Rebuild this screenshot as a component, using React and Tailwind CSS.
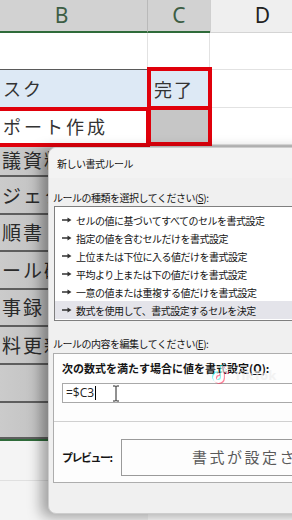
import { FaTiktok } from 'react-icons/fa';

const jp = "font-['Noto_Sans_CJK_JP',sans-serif]";

function Arrow() {
  return (
    <svg width="10" height="6" viewBox="0 0 10 6" className="shrink-0">
      <polygon points="0,2.2 5.5,2.2 5.5,0.6 9.5,3 5.5,5.4 5.5,3.8 0,3.8" fill="#333" />
    </svg>
  );
}

const rules = [
  'セルの値に基づいてすべてのセルを書式設定',
  '指定の値を含むセルだけを書式設定',
  '上位または下位に入る値だけを書式設定',
  '平均より上または下の値だけを書式設定',
  '一意の値または重複する値だけを書式設定',
  '数式を使用して、書式設定するセルを決定',
];

const lowerRows = [
  { h: 'h-[32px]', text: '議資料' },
  { h: 'h-[38px]', text: 'ジェクト' },
  { h: 'h-[37px]', text: '順書' },
  { h: 'h-[38px]', text: 'ール確認' },
  { h: 'h-[37px]', text: '事録' },
  { h: 'h-[38px]', text: '料更新' },
  { h: 'h-[38px]', text: '' },
  { h: 'h-[36px]', text: '' },
];

export default function App() {
  return (
    <div className={`relative w-[292px] h-[520px] overflow-hidden bg-white ${jp}`}>
      {/* column headers */}
      <div className="flex h-[33px]">
        <div className="w-[148px] shrink-0 flex items-center justify-center pr-[24px] bg-[#d2d2d2] border-r border-[#b9b9b9] border-b-2 border-b-[#2f6b3a] font-['Noto_Sans',sans-serif] text-[21px] text-[#3d5e45]">B</div>
        <div className="w-[62px] shrink-0 flex items-center justify-center bg-[#d2d2d2] border-b-2 border-b-[#2f6b3a] font-['Noto_Sans',sans-serif] text-[21px] text-[#3d5e45]">C</div>
        <div className="flex-1 flex items-center justify-center pl-[22px] bg-[#efefef] border-l border-[#cfcfcf] border-b border-b-[#d4d4d4] font-['Noto_Sans',sans-serif] text-[21px] text-[#222]">D</div>
      </div>

      {/* row 1 */}
      <div className="flex h-[37px]">
        <div className="w-[148px] shrink-0 border-r border-[#e2e2e2] border-b border-b-[#5a5a5a]" />
        <div className="w-[62px] shrink-0 border-r border-[#e2e2e2] border-b border-b-[#e2e2e2]" />
        <div className="flex-1 border-b border-[#e2e2e2]" />
      </div>

      {/* row 2 */}
      <div className="flex h-[38px] text-[18px] text-[#333] tracking-[2px]">
        <div className="w-[148px] shrink-0 flex items-center pl-[3px] bg-[#dde9f5] border-b border-[#5a5a5a]">スク</div>
        <div className="w-[62px] shrink-0 flex items-center pl-[6px] bg-[#dde9f5]">完了</div>
        <div className="flex-1 border-b border-[#e2e2e2]" />
      </div>

      {/* row 3 */}
      <div className="flex h-[37px] text-[18px] text-[#333] tracking-[3px]">
        <div className="w-[148px] shrink-0 flex items-center pl-[3px] bg-white">ポート作成</div>
        <div className="w-[62px] shrink-0 bg-[#c6c6c6]" />
        <div className="flex-1 border-b border-[#e2e2e2]" />
      </div>

      {/* rows under the dialog */}
      {lowerRows.map((r, i) => (
        <div key={i} className={`flex ${r.h}`}>
          <div className="w-[148px] shrink-0 flex items-center pl-[2px] bg-gradient-to-r from-[#cbcbcb] to-[#aeaeae] border-b-2 border-[#5e5e5e] text-[19px] text-[#2a2a2a] tracking-[2px] whitespace-nowrap overflow-hidden">
            {r.text}
          </div>
          <div className="flex-1 bg-[#c4c4c4]" />
        </div>
      ))}
      <div className="h-[2px] bg-[#2f6b3a]" />
      <div className="flex h-[40px]">
        <div className="w-[148px] shrink-0 bg-[#f4f4f4] border-b border-[#e0e0e0]" />
        <div className="flex-1 bg-white" />
      </div>
      <div className="flex h-[40px]">
        <div className="w-[148px] shrink-0 bg-[#f4f4f4]" />
        <div className="flex-1 bg-white" />
      </div>

      {/* red annotation boxes */}
      <div className="absolute left-[-4px] top-[107px] w-[154px] h-[40px] border-4 border-[#e0000b]" />
      <div className="absolute left-[147px] top-[67px] w-[65px] h-[43px] border-4 border-[#e0000b]" />
      <div className="absolute left-[147px] top-[106px] w-[65px] h-[40px] border-4 border-[#e0000b]" />

      {/* dialog */}
      <div className="absolute left-[48px] top-[147px] w-[270px] h-[367px] rounded-[8px] bg-[#f0f0f0] border border-[#cdcdcd] shadow-[-7px_3px_14px_rgba(0,0,0,0.35)] text-[10px] text-[#141414] tracking-[-0.5px]">
        <div className="h-[30px] flex items-center pl-[8px] bg-[#f3f3f3] rounded-t-[8px]">新しい書式ルール</div>

        <div className="mt-[12px] pl-[4px] h-[16px] leading-[16px]">
          ルールの種類を選択してください(<span className="underline">S</span>):
        </div>
        <div className="ml-[5px] border border-[#7f7f7f] bg-white pt-[4px] pb-[1px]">
          {rules.map((t, i) => (
            <div
              key={t}
              className={`h-[18px] flex items-center gap-[4px] pl-[7px] whitespace-nowrap ${i === rules.length - 1 ? 'bg-[#e4e4ea]' : ''}`}
            >
              <Arrow />
              <span>{t}</span>
            </div>
          ))}
        </div>

        <div className="mt-[15px] pl-[4px] h-[16px] leading-[16px]">
          ルールの内容を編集してください(<span className="underline">E</span>):
        </div>
        <div className="mt-[1px] ml-[4px] h-[130px] border border-[#adadad] bg-[#fdfdfd]">
          <div className="pt-[6px] pl-[8px] h-[22px] leading-[16px] text-[11px] tracking-normal font-bold whitespace-nowrap">
            次の数式を満たす場合に値を書式設定(<span className="underline">O</span>):
          </div>
          <div className="relative mt-[7px] ml-[8px] h-[20px] border border-[#a9a9a9] bg-white flex items-center pl-[3px] font-['Open_Sans',sans-serif] text-[12px] text-[#222] tracking-normal">
            <span>=$C3</span>
            <span className="w-px h-[14px] bg-black ml-px" />
            <svg width="8" height="17" viewBox="0 0 8 17" className="ml-[16px]">
              <path d="M1 1h2.5l.5.6.5-.6H7M4 1.6v13.8M1 16h2.5l.5-.6.5.6H7" fill="none" stroke="#222" strokeWidth="1" />
            </svg>
          </div>
          <div className="mt-[18px] border-t border-[#d0d0d0]" />
          <div className="mt-[17px] flex items-center">
            <div className="w-[67px] shrink-0 pl-[8px] text-[11px] tracking-[-1.5px] font-bold whitespace-nowrap">プレビュー:</div>
            <div className="flex-1 h-[37px] border border-[#9a9a9a] bg-[#fdfdfd] flex items-center pl-[70px] text-[15px] text-[#5a5a5a] tracking-[2.5px] whitespace-nowrap overflow-hidden">
              書式が設定されていません
            </div>
          </div>
        </div>
      </div>

      {/* watermark */}
      <div className="absolute left-[212px] top-[366px] flex items-center gap-[6px] opacity-60">
        <div className="relative w-[16px] h-[19px]">
          <FaTiktok className="absolute left-[-1px] top-[-1px] text-[#25f4ee]" size={17} />
          <FaTiktok className="absolute left-[1px] top-[1px] text-[#fe2c55]" size={17} />
          <FaTiktok className="absolute left-0 top-0 text-white" size={17} />
        </div>
        <span className="font-['Noto_Sans',sans-serif] font-bold text-[13px] text-[#ececec]">TikTok</span>
      </div>
    </div>
  );
}
